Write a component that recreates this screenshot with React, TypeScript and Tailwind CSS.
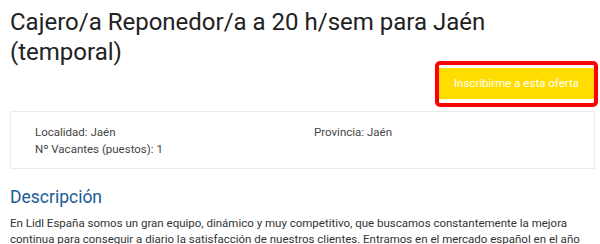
export default function App() {
  return (
    <div className="w-[600px] h-[244px] overflow-hidden bg-white pl-[10px] pr-[5px] font-['Roboto',sans-serif]">
      <h1 className="mt-[7px] text-[24px] leading-[30px] text-[#222]">
        Cajero/a Reponedor/a a 20 h/sem para Jaén (temporal)
      </h1>

      <div className="mt-[1px] flex justify-end pr-[1px]">
        <div className="relative">
          <button className="h-[31px] bg-[#ffdd00] px-[15px] text-[11.5px] text-white">
            Inscribirme a esta oferta
          </button>
          {/* highlight frame drawn over the button */}
          <span className="pointer-events-none absolute -left-[4px] -right-[4px] -top-[7px] -bottom-[8px] rounded-[5px] border-4 border-[#ff0000]" />
        </div>
      </div>

      <div className="mt-[12px] border border-[#ebebeb] pl-[24px] pt-[12px] pb-[10px] text-[11.5px] leading-[17px] text-[#444]">
        <div className="grid grid-cols-[279px_1fr]">
          <div>
            <p>Localidad: Jaén</p>
            <p>Nº Vacantes (puestos): 1</p>
          </div>
          <div>
            <p>Provincia: Jaén</p>
          </div>
        </div>
      </div>

      <h3 className="mt-[19px] text-[17.5px] leading-[19px] text-[#1b5b96]">Descripción</h3>

      <p className="mt-[8px] text-[11.5px] leading-[16px] text-[#333]">
        En Lidl España somos un gran equipo, dinámico y muy competitivo, que buscamos constantemente la mejora
        continua para conseguir a diario la satisfacción de nuestros clientes. Entramos en el mercado español en el año
        1994 y desde entonces no hemos dejado de crecer.
      </p>
    </div>
  );
}
